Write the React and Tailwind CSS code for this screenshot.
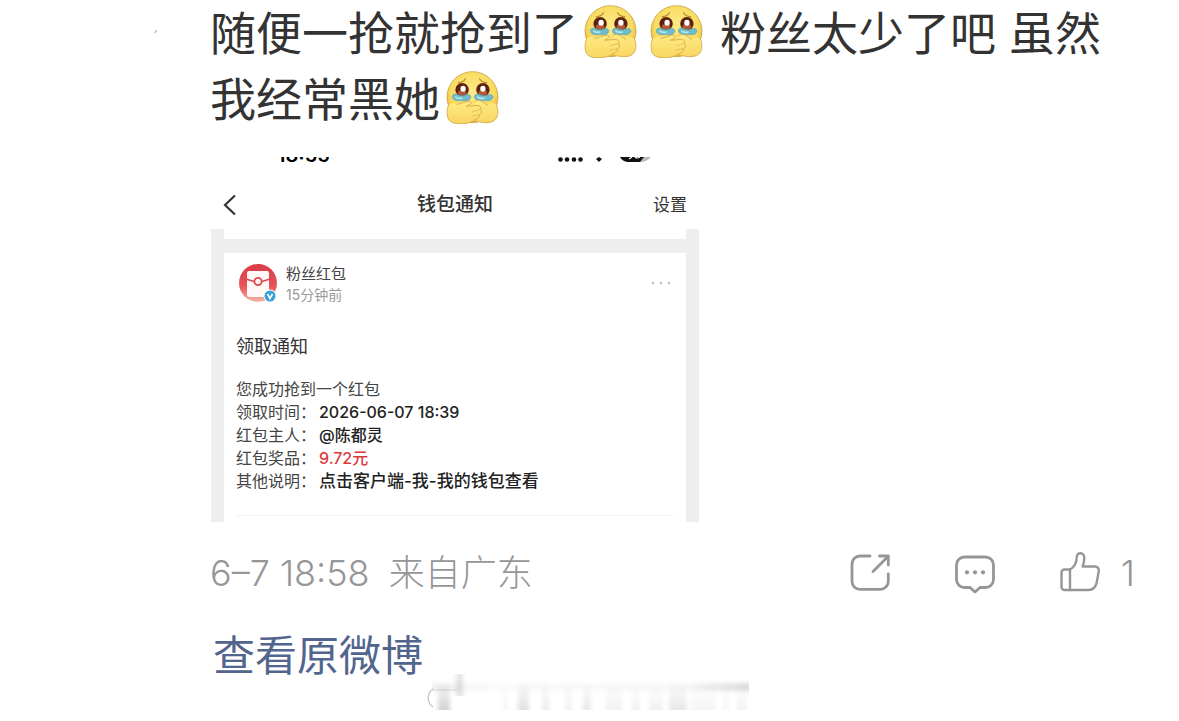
const DETAILS = [
  { label: '领取时间：', value: '2026-06-07 18:39', style: 'text-base text-[#222222]' },
  { label: '红包主人：', value: '@陈都灵', style: 'text-base text-[#222222]' },
  { label: '红包奖品：', value: '9.72元', style: 'text-base text-[#dc3a3c]' },
  { label: '其他说明：', value: '点击客户端-我-我的钱包查看', style: 'text-[17px] text-[#222222]' }
];

// rough greys left behind by the smudged watermark
const SMUDGES = [
  { x: 11, w: 12, o: 0.18 },
  { x: 75, w: 6, o: 0.03 },
  { x: 91, w: 11, o: 0.12 },
  { x: 115, w: 7, o: 0.08 },
  { x: 138, w: 7, o: 0.06 },
  { x: 156, w: 8, o: 0.09 },
  { x: 179, w: 16, o: 0.05 },
  { x: 204, w: 9, o: 0.05 },
  { x: 222, w: 14, o: 0.05 },
  { x: 242, w: 18, o: 0.09 },
  { x: 264, w: 25, o: 0.04 },
  { x: 296, w: 6, o: 0.04 },
  { x: 310, w: 9, o: 0.05 }
];

function CryEmoji({ className }) {
  return (
    <svg viewBox="0 0 156 158" role="img" aria-label="泪奔" className={`inline-block h-[53px] w-[53px] align-[-8px] ${className}`}>
      <defs>
        <radialGradient id="face" cx="0.5" cy="0.4" r="0.6">
          <stop offset="0" stopColor="#fdeb86" />
          <stop offset="0.7" stopColor="#f9dc60" />
          <stop offset="1" stopColor="#e3b440" />
        </radialGradient>
        <linearGradient id="hand" x1="0" y1="0" x2="0" y2="1">
          <stop offset="0" stopColor="#ffeb84" />
          <stop offset="1" stopColor="#f8d662" />
        </linearGradient>
      </defs>
      <ellipse cx="78" cy="78" rx="76" ry="76" fill="url(#face)" stroke="#c9a347" strokeWidth="2.5" />
      <path d="M36 35c10-1 17-5 21-12M99 23c4 7 11 11 21 12" fill="none" stroke="#b98c34" strokeWidth="4" strokeLinecap="round" />
      <ellipse cx="47" cy="56" rx="20" ry="20" fill="#5d1f10" />
      <ellipse cx="109" cy="56" rx="20" ry="20" fill="#5d1f10" />
      <ellipse cx="47" cy="65" rx="13" ry="8" fill="#b05a38" />
      <ellipse cx="109" cy="65" rx="13" ry="8" fill="#b05a38" />
      <ellipse cx="50" cy="53" rx="8" ry="9" fill="#fff" />
      <ellipse cx="109" cy="53" rx="8" ry="9" fill="#fff" />
      <path d="M18 79c-2-9 9-13 16-8 8 4 18 4 25 0 8-4 17 3 13 10-4 8-14 9-25 7-13 2-26 1-29-9z" fill="#6fbccb" stroke="#5ea4b2" strokeWidth="2" />
      <path d="M84 79c-2-9 9-13 16-8 8 4 18 4 25 0 8-4 17 3 13 10-4 8-14 9-25 7-13 2-26 1-29-9z" fill="#6fbccb" stroke="#5ea4b2" strokeWidth="2" />
      <path d="M28 78c6 3 12 4 18 3M94 78c6 3 12 4 18 3" fill="none" stroke="#b4e3e6" strokeWidth="5" strokeLinecap="round" />
      {/* right hand sits behind the left one */}
      <path d="M84 92c3-6 14-7 24 0l14 10c9-8 20-8 27-1 6 8 6 27 1 38-6 14-26 18-50 13-14-3-26-12-24-22l14-20z" fill="url(#hand)" />
      <path d="M84 93c3-7 14-8 24-1l14 10M149 101c6 8 6 27 1 38-6 14-26 18-50 13" fill="none" stroke="#d0a647" strokeWidth="2.5" strokeLinecap="round" />
      <path d="M6 103c6-9 16-10 26-3l28-9c12-4 19 3 9 9l-9 5 28-2c14-1 18 6 13 12 6 5 4 11-2 15 1 7-5 12-13 15-10 9-27 13-47 12-20 0-32-6-35-19-3-13-2-27 2-35z" fill="url(#hand)" />
      <path d="M32 100l28-9c12-4 19 3 9 9l-9 5 28-2c14-1 18 6 13 12 6 5 4 11-2 15 1 7-5 12-13 15-10 9-27 13-47 12-20 0-32-6-35-19-3-13-2-27 2-35" fill="none" stroke="#d0a647" strokeWidth="2.5" strokeLinecap="round" />
      <path d="M100 115l-24 7M98 130l-22 5" fill="none" stroke="#d9b352" strokeWidth="2" strokeLinecap="round" />
    </svg>
  );
}

function PacketAvatar() {
  return (
    <svg viewBox="0 0 40 40" className="h-10 w-10 shrink-0" aria-hidden="true">
      <defs>
        <linearGradient id="packet" x1="0" y1="0" x2="0" y2="1">
          <stop offset="0" stopColor="#d93b46" />
          <stop offset="0.6" stopColor="#e5565a" />
          <stop offset="1" stopColor="#f6b9a8" />
        </linearGradient>
      </defs>
      <circle cx="20" cy="20" r="19" fill="url(#packet)" />
      <path d="M11 8h18a2 2 0 0 1 2 2v22a2 2 0 0 1-2 2H11a2 2 0 0 1-2-2V10a2 2 0 0 1 2-2z" fill="#fff8f6" />
      <path d="M8 16l8 2.500M32 16l-8 2.500" stroke="#dc4850" strokeWidth="1.800" />
      <circle cx="20" cy="18.500" r="3.600" fill="#fff8f6" stroke="#dc4850" strokeWidth="1.800" />
      <circle cx="32" cy="33" r="6.500" fill="#fff" />
      <circle cx="32" cy="33" r="5.500" fill="#359fd9" />
      <path d="M29.500 31l2.500 4.500 2.500-4.500" fill="none" stroke="#fff" strokeWidth="1.600" />
    </svg>
  );
}

function StatusIcons() {
  return (
    <svg viewBox="0 0 96 5" className="h-[5px] w-24" aria-hidden="true">
      <g fill="#111">
        <circle cx="4.500" cy="2.500" r="2.300" />
        <circle cx="11" cy="2.500" r="2.300" />
        <circle cx="18" cy="2.500" r="2.300" />
        <circle cx="24.500" cy="2.500" r="2.300" />
        <path d="M43 0l3 2-3 3-3-3z" />
        <path d="M64 0h25l-4 5H71q-5-1-7-5z" />
      </g>
      <path d="M88 0h7q-3 4-9 5h-2z" fill="#bbb" />
      <path d="M73 2l3-2M79 0q2 2 5 0" stroke="#fff" strokeWidth="1.200" fill="none" />
    </svg>
  );
}

function WalletCard() {
  return (
    <section className="mt-[25px] ml-px flex h-[365px] w-[488px] max-w-full flex-col overflow-hidden bg-[#eeeeee]">
      {/* Clipped status bar */}
      <div className="flex h-[5px] shrink-0 items-end justify-between overflow-hidden bg-white pr-[47px] pl-[66px]">
        <span className="text-[20px] leading-[14px] font-semibold text-black">18:55</span>
        <StatusIcons />
      </div>

      <header className="grid h-[67px] shrink-0 grid-cols-[1fr_auto_1fr] items-center bg-white px-3 pt-[18px]">
        <button type="button" aria-label="返回" className="w-4">
          <svg viewBox="0 0 16 22" className="h-[22px] w-4" fill="none" stroke="#333" strokeWidth="2.2">
            <path d="M12 1.500L2 11 12 20.500" />
          </svg>
        </button>
        <h2 className="text-[19px] leading-6 font-medium text-[#333333]">钱包通知</h2>
        <button type="button" className="justify-self-end text-[17px] leading-6 text-[#333333]">设置</button>
      </header>

      <div className="mx-[13px] h-[10px] shrink-0 bg-white" />

      <article className="mx-[13px] mt-[14px] flex-1 bg-white px-3 pt-[10px]">
        <div className="flex items-start">
          <div className="ml-[2px]">
            <PacketAvatar />
          </div>
          <div className="ml-2 flex-1">
            <h3 className="text-[15px] leading-[22px] text-[#444444]">粉丝红包</h3>
            <p className="text-sm leading-5 text-[#999999]">15分钟前</p>
          </div>
          <button type="button" aria-label="更多" className="mt-[18px] mr-[2px]">
            <svg viewBox="0 0 22 4" className="h-1 w-[22px]" fill="#bdbdbd">
              <circle cx="3" cy="2" r="1.300" />
              <circle cx="11" cy="2" r="1.300" />
              <circle cx="19" cy="2" r="1.300" />
            </svg>
          </button>
        </div>

        <h4 className="mt-[30px] text-lg leading-6 text-[#333333]">领取通知</h4>

        <div className="mt-[19px] text-base leading-[23px] text-[#444444]">
          <p>您成功抢到一个红包</p>
          <dl>
            {DETAILS.map((d) => (
              <div className="flex whitespace-nowrap" key={d.label}>
                <dt className="w-[83px]">{d.label}</dt>
                <dd className={`leading-[23px] font-medium ${d.style}`}>{d.value}</dd>
              </div>
            ))}
          </dl>
        </div>
        <hr className="mt-[22px] border-[#f2f2f2]" />
      </article>
    </section>
  );
}

function Smudge() {
  return (
    <svg viewBox="0 0 324 40" className="-mt-2 ml-[217px] h-10 w-[324px]" aria-hidden="true">
      <defs>
        <linearGradient id="fade" x1="0" y1="0" x2="0" y2="1">
          <stop offset="0" stopColor="#000" stopOpacity="0" />
          <stop offset="1" stopColor="#000" />
        </linearGradient>
        <linearGradient id="bar" x1="0" y1="0" x2="1" y2="0">
          <stop offset="0" stopColor="#000" stopOpacity="0.06" />
          <stop offset="0.2" stopColor="#000" stopOpacity="0.02" />
          <stop offset="0.8" stopColor="#000" stopOpacity="0.03" />
          <stop offset="1" stopColor="#000" stopOpacity="0.14" />
        </linearGradient>
        <filter id="soft" x="-50%" y="-20%" width="200%" height="140%">
          <feGaussianBlur stdDeviation="2 0" />
        </filter>
        <filter id="softBar" x="0" y="-100%" width="100%" height="300%">
          <feGaussianBlur stdDeviation="0 2" />
        </filter>
      </defs>
      {SMUDGES.map((s) => (
        <rect key={s.x} x={s.x} y="8" width={s.w} height="29" fill="url(#fade)" opacity={s.o} filter="url(#soft)" />
      ))}
      <rect x="5" y="10" width="317" height="8" fill="url(#bar)" filter="url(#softBar)" />
      <rect x="29" y="1" width="7" height="22" fill="#000" opacity="0.1" filter="url(#soft)" />
      <path d="M6 16q-4 2-5 9 1 7 5 9" fill="none" stroke="#000" strokeOpacity="0.25" strokeWidth="1.200" />
      <path d="M6 17h24" stroke="#000" strokeOpacity="0.12" />
    </svg>
  );
}

const iconProps = {
  className: 'h-11 w-11',
  fill: 'none',
  stroke: '#969696',
  strokeWidth: 2.8,
  strokeLinecap: 'round',
  strokeLinejoin: 'round'
};

export default function App() {
  return (
    <main className="flex min-h-screen bg-white font-[Inter,'Noto_Sans_CJK_SC',sans-serif]">
      <div className="w-[210px] shrink-0">
        <svg viewBox="0 0 6 8" className="mt-7 ml-[153px] h-2 w-[6px]" aria-hidden="true">
          <path d="M2 5l1.500-3" stroke="#999" strokeWidth="1" />
        </svg>
      </div>

      <div className="min-w-0 flex-1 pr-11">
        <p className="text-[46px] leading-[66px] text-[#333333]">
          随便一抢就抢到了
          <CryEmoji className="ml-[6px]" />
          <CryEmoji className="ml-[13px] mr-[4px]" /> 粉丝太少了吧 虽然我经常黑她
          <CryEmoji className="ml-[6px]" />
        </p>

        <WalletCard />

        {/* Meta and actions */}
        <div className="mt-[29px] flex h-11 items-center justify-between text-[36px] leading-11 font-light text-[#969696]">
          <div className="flex gap-[19px]">
            <time>6–7 18:58</time>
            <span>来自广东</span>
          </div>
          <div className="flex items-center gap-[61px]">
            <button type="button" aria-label="转发">
              <svg viewBox="8 11 44 44" {...iconProps}>
                <path d="M30 16H20a8 8 0 0 0-8 8v17.300a8 8 0 0 0 8 8h20.300a8 8 0 0 0 8-8V34" />
                <path d="M33 31.500L48 16.500M39.500 16h8.800v9" />
              </svg>
            </button>
            <button type="button" aria-label="评论">
              <svg viewBox="113 11 44 44" {...iconProps}>
                <path d="M124.500 17h21a8 8 0 0 1 8 8v14.500a8 8 0 0 1-8 8h-5.500l-5 4.500-5-4.500h-5.500a8 8 0 0 1-8-8V25a8 8 0 0 1 8-8z" />
                <g fill="#969696" stroke="none">
                  <circle cx="127" cy="32.300" r="2.100" />
                  <circle cx="135" cy="32.300" r="2.100" />
                  <circle cx="143" cy="32.300" r="2.100" />
                </g>
              </svg>
            </button>
            <button type="button" aria-label="赞" className="flex items-center gap-[19px]">
              <svg viewBox="218 11 44 44" {...iconProps} strokeWidth={2.4}>
                <path d="M230 29.500C234.500 27 236.500 23 236.700 17.500c0-6 7.800-5.500 7.600.5 0 3-.7 6-1.700 8.500H255a3.800 3.800 0 0 1 3.800 4.400l-2 11.100c-1 5-3.800 8-8.300 8h-24a3 3 0 0 1-3-3V32.500a3 3 0 0 1 3-3z" />
                <path d="M230 29.500V50" />
              </svg>
              <span>1</span>
            </button>
          </div>
        </div>

        <a href="#weibo" className="mt-9 ml-[3px] block w-fit text-[42px] leading-[50px] text-[#52658c]">查看原微博</a>
        <Smudge />
      </div>
    </main>
  );
}
